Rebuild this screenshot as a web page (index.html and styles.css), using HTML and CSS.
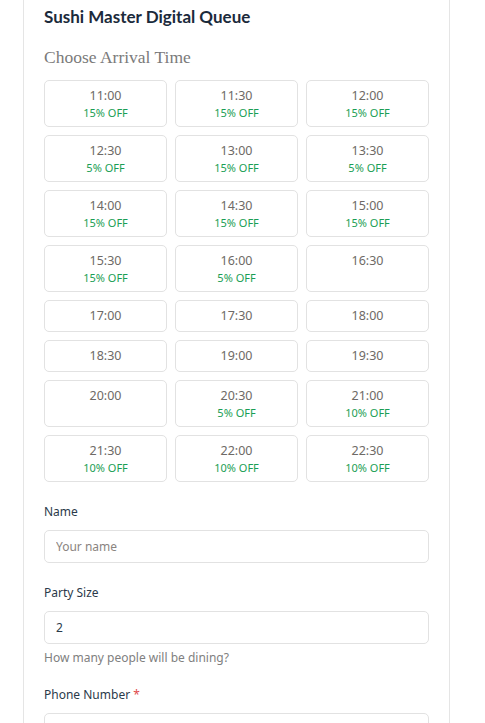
FILE: index.html
```html
<!DOCTYPE html>
<html lang="en">
<head>
<meta charset="utf-8">
<title>Sushi Master Digital Queue</title>
<link rel="stylesheet" href="styles.css">
</head>
<body>
<div class="card">
  <h1 class="title">Sushi Master Digital Queue</h1>
  <h2 class="subtitle">Choose Arrival Time</h2>
  <div class="slots">
    <button class="slot"><span class="time">11:00</span><span class="off">15% OFF</span></button>
    <button class="slot"><span class="time">11:30</span><span class="off">15% OFF</span></button>
    <button class="slot"><span class="time">12:00</span><span class="off">15% OFF</span></button>
    <button class="slot"><span class="time">12:30</span><span class="off">5% OFF</span></button>
    <button class="slot"><span class="time">13:00</span><span class="off">15% OFF</span></button>
    <button class="slot"><span class="time">13:30</span><span class="off">5% OFF</span></button>
    <button class="slot"><span class="time">14:00</span><span class="off">15% OFF</span></button>
    <button class="slot"><span class="time">14:30</span><span class="off">15% OFF</span></button>
    <button class="slot"><span class="time">15:00</span><span class="off">15% OFF</span></button>
    <button class="slot"><span class="time">15:30</span><span class="off">15% OFF</span></button>
    <button class="slot"><span class="time">16:00</span><span class="off">5% OFF</span></button>
    <button class="slot"><span class="time">16:30</span></button>
    <button class="slot"><span class="time">17:00</span></button>
    <button class="slot"><span class="time">17:30</span></button>
    <button class="slot"><span class="time">18:00</span></button>
    <button class="slot"><span class="time">18:30</span></button>
    <button class="slot"><span class="time">19:00</span></button>
    <button class="slot"><span class="time">19:30</span></button>
    <button class="slot"><span class="time">20:00</span></button>
    <button class="slot"><span class="time">20:30</span><span class="off">5% OFF</span></button>
    <button class="slot"><span class="time">21:00</span><span class="off">10% OFF</span></button>
    <button class="slot"><span class="time">21:30</span><span class="off">10% OFF</span></button>
    <button class="slot"><span class="time">22:00</span><span class="off">10% OFF</span></button>
    <button class="slot"><span class="time">22:30</span><span class="off">10% OFF</span></button>
  </div>

  <div class="field">
    <label class="label" for="name">Name</label>
    <input class="input" id="name" type="text" placeholder="Your name">
  </div>
  <div class="field">
    <label class="label" for="party">Party Size</label>
    <input class="input" id="party" type="text" value="2">
    <p class="help">How many people will be dining?</p>
  </div>
  <div class="field field-tight">
    <label class="label" for="phone">Phone Number <span class="req">*</span></label>
    <input class="input" id="phone" type="text">
  </div>
</div>
</body>
</html>
```
FILE: styles.css
```css
html, body {
  margin: 0;
  padding: 0;
  background: #ffffff;
}
body {
  font-family: "Noto Sans", "Open Sans", sans-serif;
  color: #1f2d3d;
}
.card {
  margin-left: 23px;
  width: 385px;
  padding: 5px 20px 40px;
  border-left: 1px solid #e5e5e5;
  border-right: 1px solid #e5e5e5;
}
.title {
  margin: 0;
  font-family: Lato, "Noto Sans", sans-serif;
  font-size: 17px;
  line-height: 24px;
  font-weight: 700;
  color: #1b2a3b;
}
.subtitle {
  margin: 17px 0 0;
  font-family: "Liberation Serif", "DejaVu Serif", serif;
  font-weight: 400;
  font-size: 17.5px;
  line-height: 22px;
  color: #7a7a7a;
}
.slots {
  margin-top: 12px;
  display: grid;
  grid-template-columns: repeat(3, 1fr);
  gap: 8px 8px;
}
.slot {
  display: flex;
  flex-direction: column;
  align-items: center;
  justify-content: flex-start;
  padding: 7px 4px 7px;
  background: #fff;
  border: 1px solid #e2e2e2;
  border-radius: 5px;
  font-family: inherit;
}
.time {
  font-size: 12.5px;
  line-height: 16px;
  color: #6e6a66;
}
.off {
  margin-top: 2px;
  font-size: 11px;
  line-height: 13px;
  color: #1a9e55;
}
.field {
  margin-top: 22px;
}
.field-tight {
  margin-top: 21px;
}
.label {
  display: block;
  font-size: 12px;
  line-height: 16px;
  color: #2b3a4a;
  margin-bottom: 10px;
}
.req {
  color: #e04b4b;
}
.input {
  box-sizing: border-box;
  display: block;
  width: 100%;
  height: 33px;
  padding: 0 11px;
  border: 1px solid #e2e2e2;
  border-radius: 5px;
  font-family: inherit;
  font-size: 12px;
  color: #2b3a4a;
  background: #fff;
}
.input::placeholder {
  color: #8a8480;
}
.help {
  margin: 6px 0 0;
  font-size: 12px;
  line-height: 16px;
  color: #808080;
}
```
